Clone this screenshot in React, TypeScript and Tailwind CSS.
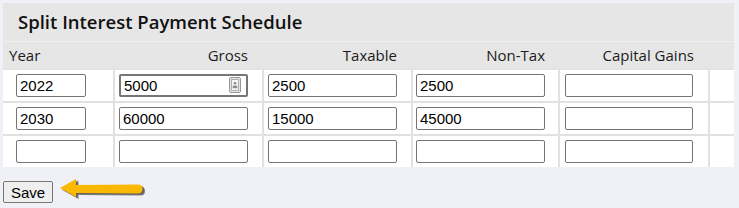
/**
 * Split Interest Payment Schedule
 * Editable grid of yearly payments with a save button
 */

import React from "react";

interface ScheduleRow {
  year: string;
  gross: string;
  taxable: string;
  nonTax: string;
  capitalGains: string;
}

const rows: ScheduleRow[] = [
  { year: "2022", gross: "5000", taxable: "2500", nonTax: "2500", capitalGains: "" },
  { year: "2030", gross: "60000", taxable: "15000", nonTax: "45000", capitalGains: "" },
  { year: "", gross: "", taxable: "", nonTax: "", capitalGains: "" },
];

const cols = "grid grid-cols-[110px_147px_147px_145px_148px_1fr] gap-x-[2px]";

const inputBase =
  "block h-[23px] rounded-[2px] border border-[#767676] bg-white px-[3px] text-[15px] text-black outline-none font-['Liberation_Sans',Arial,sans-serif]";

function AutofillIcon() {
  return (
    <svg
      width="12"
      height="16"
      viewBox="0 0 12 16"
      className="absolute right-[7px] top-[3px]"
    >
      <rect x="0.5" y="0.5" width="11" height="15" rx="1.5" fill="#e4e4e4" stroke="#9a9a9a" />
      <rect x="2.5" y="2.5" width="7" height="11" fill="#f4f4f4" stroke="#b0b0b0" />
      <circle cx="6" cy="6.3" r="1.3" fill="#8a8a8a" />
      <rect x="3.8" y="8.6" width="4.4" height="2.6" fill="#8a8a8a" />
    </svg>
  );
}

function Cell({
  value,
  width,
  padLeft,
  focused,
}: {
  value: string;
  width: string;
  padLeft: string;
  focused?: boolean;
}) {
  return (
    <div className={`flex h-[31px] items-center bg-white ${padLeft}`}>
      {focused ? (
        <div className={`relative ${width}`}>
          <input
            defaultValue={value}
            className={`${inputBase} w-full border-2 border-[#1a1a1a] px-[2px]`}
          />
          <AutofillIcon />
        </div>
      ) : (
        <input defaultValue={value} className={`${inputBase} ${width}`} />
      )}
    </div>
  );
}

function SaveArrow() {
  const d =
    "M2 10 L18 1 L18 7 L80 6.5 Q84.5 6.5 84.5 11 Q84.5 15.5 80 15.5 L18 15 L18 19 Z";
  return (
    <svg width="92" height="28" viewBox="0 0 92 28" className="ml-[5px]">
      <path d={d} fill="#222" opacity="0.55" transform="translate(2.5 2)" />
      <path d={d} fill="#222" opacity="0.35" transform="translate(1.5 1)" />
      <path d={d} fill="#fbb800" />
    </svg>
  );
}

export default function App() {
  return (
    <div className="min-h-[208px] w-[739px] bg-[#f0f1f7] pl-[3px] pt-[3px]">
      <div className="w-[731px]">
        <div className="flex h-[39px] items-center border-b border-[#f0f0f0] bg-[#e6e6e6] pl-[15px] text-[18.5px] font-semibold text-[#111] font-['Open_Sans',sans-serif]">
          Split Interest Payment Schedule
        </div>

        <div
          className={`${cols} h-[27px] items-center bg-[#e6e6e6] text-[15px] text-[#1c1c1c] font-['Open_Sans',sans-serif]`}
        >
          <div className="pl-[6px]">Year</div>
          <div className="pr-[14px] text-right">Gross</div>
          <div className="pr-[14px] text-right">Taxable</div>
          <div className="pr-[13px] text-right">Non-Tax</div>
          <div className="pr-[14px] text-right">Capital Gains</div>
          <div></div>
        </div>

        <div className={`${cols} gap-y-[2px] bg-[#e1e1e1] pt-[1px]`}>
          {rows.map((row, i) => (
            <React.Fragment key={i}>
              <Cell value={row.year} width="w-[70px]" padLeft="pl-[13px]" />
              <Cell value={row.gross} width="w-[129px]" padLeft="pl-[4px]" focused={i === 0} />
              <Cell value={row.taxable} width="w-[129px]" padLeft="pl-[4px]" />
              <Cell value={row.nonTax} width="w-[129px]" padLeft="pl-[3px]" />
              <Cell value={row.capitalGains} width="w-[128px]" padLeft="pl-[5px]" />
              <div className="bg-white"></div>
            </React.Fragment>
          ))}
        </div>
      </div>

      <div className="mt-[11px] flex items-center">
        <button className="h-[22px] w-[50px] rounded-[2px] border border-[#767676] bg-[#efefef] text-[15px] text-black font-['Liberation_Sans',Arial,sans-serif]">
          Save
        </button>
        <SaveArrow />
      </div>
    </div>
  );
}
